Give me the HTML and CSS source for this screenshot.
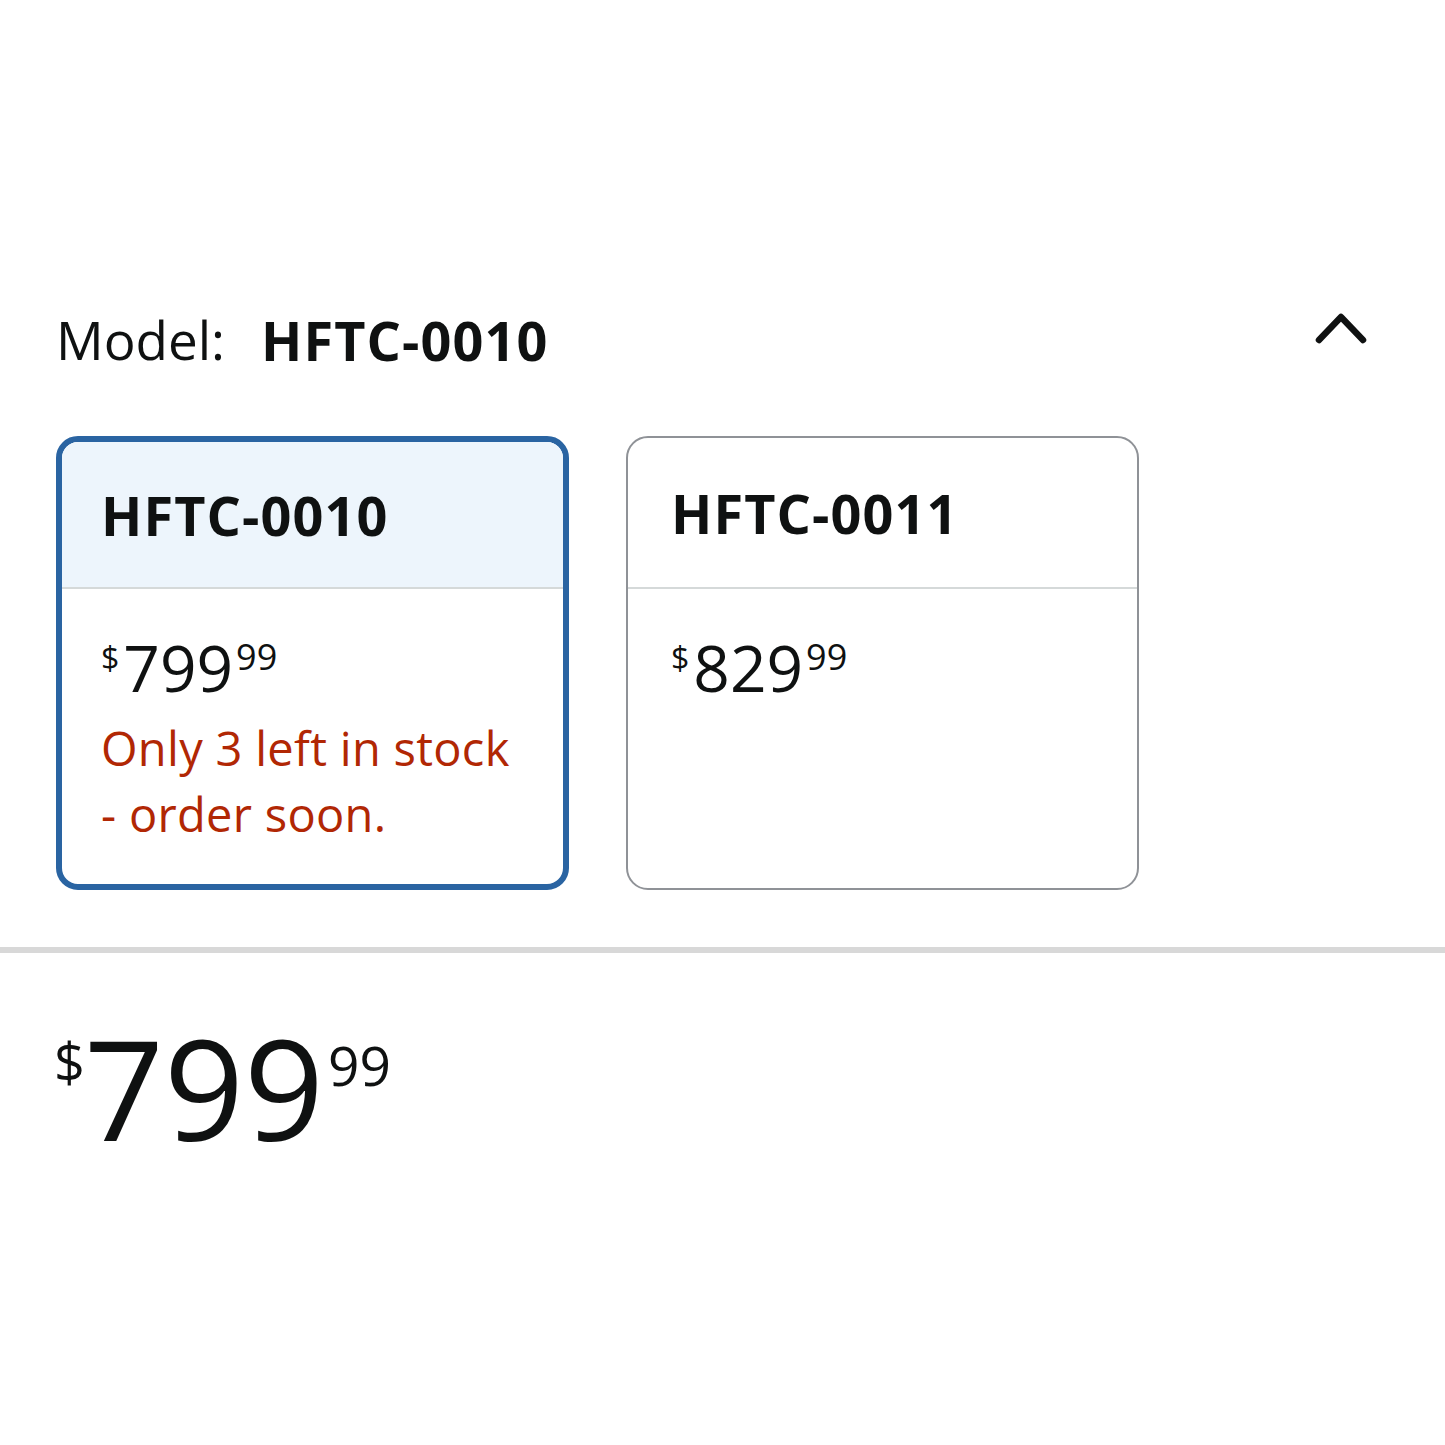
FILE: index.html
```html
<!DOCTYPE html>
<html lang="en">
<head>
<meta charset="utf-8">
<title>Model selection</title>
<link rel="stylesheet" href="styles.css">
</head>
<body>
<main class="page">
  <section class="variation">
    <div class="var-header">
      <div class="var-title">
        <span class="var-label">Model:</span>
        <span class="var-value">HFTC-0010</span>
      </div>
      <svg class="chevron" width="52" height="34" viewBox="0 0 52 34" aria-hidden="true">
        <polyline points="4,29 26,6 48,29" fill="none" stroke="#0f1111" stroke-width="6.5" stroke-linecap="round" stroke-linejoin="round"/>
      </svg>
    </div>
    <div class="options">
      <div class="option option--selected">
        <div class="option-head">HFTC-0010</div>
        <div class="option-body">
          <div class="price price--small"><span class="sym">$</span><span class="whole">799</span><span class="frac">99</span></div>
          <div class="stock">Only 3 left in stock<br>- order soon.</div>
        </div>
      </div>
      <div class="option">
        <div class="option-head">HFTC-0011</div>
        <div class="option-body">
          <div class="price price--small"><span class="sym">$</span><span class="whole">829</span><span class="frac">99</span></div>
        </div>
      </div>
    </div>
  </section>
  <div class="divider"></div>
  <section class="buybox">
    <div class="price price--big"><span class="sym">$</span><span class="whole">799</span><span class="frac">99</span></div>
  </section>
</main>
</body>
</html>
```

FILE: styles.css
```css
html, body {
  margin: 0;
  padding: 0;
  background: #ffffff;
}
body {
  font-family: "Open Sans", "Noto Sans", sans-serif;
  color: #0f1111;
}
.page {
  padding-top: 300px;
}
.variation {
  padding: 0 56px 0 56px;
}
.var-header {
  display: flex;
  justify-content: space-between;
  align-items: flex-start;
  height: 90px;
}
.var-title {
  font-size: 53px;
  line-height: 80px;
  display: flex;
  gap: 36px;
}
.var-label {
  font-weight: 400;
}
.var-value {
  font-weight: 700;
  font-size: 54px;
  letter-spacing: 1.1px;
}
.chevron {
  margin-top: 11px;
  margin-right: 22px;
}
.options {
  display: flex;
  gap: 57px;
  margin-top: 46px;
}
.option {
  box-sizing: border-box;
  width: 513px;
  height: 454px;
  border: 2px solid #8f9297;
  border-radius: 22px;
  overflow: hidden;
  background: #fff;
}
.option--selected {
  border: 6px solid #2a64a2;
}
.option-head {
  box-sizing: border-box;
  height: 151px;
  border-bottom: 2px solid #d5d9d9;
  padding-left: 43px;
  font-size: 54px;
  font-weight: 700;
  letter-spacing: 1.1px;
  line-height: 150px;
}
.option--selected .option-head {
  height: 147px;
  background: #edf5fc;
  padding-left: 39px;
  line-height: 146px;
}
.option-body {
  padding: 47px 43px 0 43px;
}
.option--selected .option-body {
  padding-left: 39px;
}
.price {
  display: flex;
  align-items: flex-start;
  line-height: 1;
}
.price--small .sym {
  font-size: 32px;
  margin-top: 6px;
}
.price--small .whole {
  font-size: 64px;
  margin-left: 4px;
}
.price--small .frac {
  font-size: 36px;
  margin-top: 3px;
  margin-left: 3px;
}
.stock {
  margin-top: 15px;
  color: #b12704;
  font-size: 47px;
  letter-spacing: 0.3px;
  line-height: 66px;
}
.divider {
  height: 6px;
  background: #d8d8d8;
  margin-top: 57px;
}
.buybox {
  padding: 84px 54px 0 54px;
}
.price--big .sym {
  font-size: 54px;
  margin-top: -3px;
}
.price--big .whole {
  font-size: 140px;
  margin-top: -20px;
  margin-left: -1px;
}
.price--big .frac {
  font-size: 55px;
  margin-top: 0;
  margin-left: 4px;
}
```
